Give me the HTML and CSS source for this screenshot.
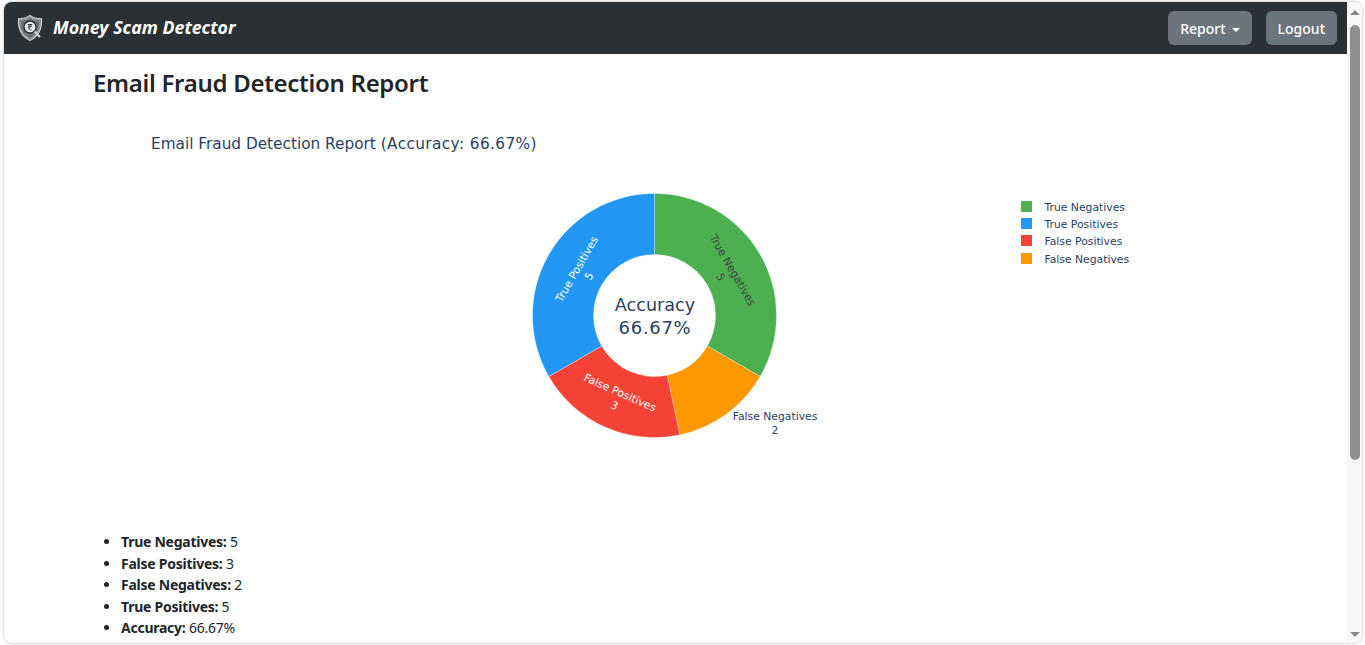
FILE: index.html
```html
<!DOCTYPE html>
<html lang="en">
<head>
<meta charset="UTF-8">
<meta name="viewport" content="width=device-width, initial-scale=1.0">
<title>Email Fraud Detection Report</title>
<link rel="stylesheet" href="styles.css">
</head>
<body>
<div class="window">
  <div class="page">
    <nav class="navbar">
      <a class="brand" href="#">
        <svg class="brand-logo" width="28" height="28" viewBox="0 0 28 28">
          <path d="M14 1.5 C17.5 4 21.5 4.8 25.5 4.8 C26 13 24.5 21.5 14 26.5 C3.5 21.5 2 13 2.5 4.8 C6.5 4.8 10.5 4 14 1.5 Z" fill="#8a8d8f" stroke="#c9cbcc" stroke-width="1.2"/>
          <path d="M14 4.500 C16.800 6.300 19.500 6.900 23 7 C23.200 14 21 20.500 14 24 C7 20.500 4.800 14 5 7 C8.500 6.900 11.200 6.300 14 4.500 Z" fill="#6b6e70"/>
          <circle cx="14" cy="13" r="6" fill="#e6e7e8" stroke="#2b3035" stroke-width="1.300"/>
          <path d="M11.800 10.500 H16.200 M11.800 12.200 H16.200 M12.200 10.500 C15.300 10.500 15.300 14 12.200 14 L15.300 16.300" fill="none" stroke="#33383c" stroke-width="1"/>
          <path d="M18.500 17.500 L24 23" stroke="#d5d6d7" stroke-width="2.200"/>
        </svg>
        <span class="brand-name">Money Scam Detector</span>
      </a>
      <div class="nav-actions">
        <button class="btn">Report<span class="caret"></span></button>
        <button class="btn">Logout</button>
      </div>
    </nav>
    <main class="content">
      <h1>Email Fraud Detection Report</h1>
      <svg class="chart" width="1200" height="408" viewBox="0 0 1200 408">
        <g transform="translate(-93,-112)">
          <text class="chart-title" x="151" y="149">Email Fraud Detection Report <tspan class="chart-title-acc">(Accuracy: 66.67%)</tspan></text>

          <path fill="#4caf50" stroke="#fff" stroke-width="0.300" d="M654.5 193.500 A122 122 0 0 1 760.15 376.500 L707.33 346 A61 61 0 0 0 654.5 254.500 Z"/>
          <path fill="#ff9800" stroke="#fff" stroke-width="0.300" d="M760.15 376.500 A122 122 0 0 1 679.87 434.83 L667.18 375.17 A61 61 0 0 0 707.33 346 Z"/>
          <path fill="#f44336" stroke="#fff" stroke-width="0.300" d="M679.87 434.83 A122 122 0 0 1 548.85 376.500 L601.67 346 A61 61 0 0 0 667.18 375.17 Z"/>
          <path fill="#2196f3" stroke="#fff" stroke-width="0.300" d="M548.85 376.500 A122 122 0 0 1 654.5 193.500 L654.5 254.500 A61 61 0 0 0 601.67 346 Z"/>

          <g class="slice-label dark" transform="translate(729.5,272) rotate(60)">
            <text y="0">True Negatives</text>
            <text y="14">5</text>
          </g>
          <g class="slice-label" transform="translate(580,271) rotate(-60)">
            <text y="0">True Positives</text>
            <text y="14">5</text>
          </g>
          <g class="slice-label" transform="translate(618.5,396) rotate(24)">
            <text y="0">False Positives</text>
            <text y="14">3</text>
          </g>
          <g class="slice-label outside">
            <text x="775" y="420">False Negatives</text>
            <text x="775" y="434">2</text>
          </g>

          <text class="center-label" x="655" y="311">Accuracy</text>
          <text class="center-label center-value" x="655" y="334">66.67%</text>

          <g class="legend">
            <rect x="1021" y="201" width="11" height="11" fill="#4caf50"/>
            <text x="1044.500" y="211">True Negatives</text>
            <rect x="1021" y="218" width="11" height="11" fill="#2196f3"/>
            <text x="1044.500" y="228">True Positives</text>
            <rect x="1021" y="235" width="11" height="11" fill="#f44336"/>
            <text x="1044.500" y="245">False Positives</text>
            <rect x="1021" y="253" width="11" height="11" fill="#ff9800"/>
            <text x="1044.500" y="263">False Negatives</text>
          </g>
        </g>
      </svg>
      <ul class="stats">
        <li><strong>True Negatives:</strong> 5</li>
        <li><strong>False Positives:</strong> 3</li>
        <li><strong>False Negatives:</strong> 2</li>
        <li><strong>True Positives:</strong> 5</li>
        <li><strong>Accuracy:</strong> 66.67%</li>
      </ul>
    </main>
  </div>
  <div class="scrollbar">
    <span class="arrow-up"></span>
    <div class="thumb"></div>
    <span class="arrow-down"></span>
  </div>
</div>
</body>
</html>
```
FILE: styles.css
```css
html, body {
    height: 100%;
}

body {
    margin: 0;
    padding: 2px 3px 1px 4px;
    box-sizing: border-box;
    background-color: #fff;
    font-family: "Noto Sans", "Liberation Sans", sans-serif;
    color: #212529;
    overflow: hidden;
}

.window {
    display: flex;
    height: 641px;
    overflow: hidden;
    background-color: #fff;
    border-radius: 8px;
    box-shadow: 0 0 3px rgba(0, 0, 0, 0.3);
}

.page {
    flex: 1;
    min-width: 0;
    overflow: hidden;
}

.navbar {
    display: flex;
    align-items: center;
    justify-content: space-between;
    height: 52px;
    padding: 0 10px 0 12px;
    background-color: #2b3035;
}

.brand {
    display: flex;
    align-items: center;
    gap: 9px;
    color: #fff;
    font-size: 17.8px;
    font-weight: 700;
    font-style: italic;
    text-decoration: none;
}

.brand-name {
    margin-top: -2px;
}

.brand-logo {
    display: block;
}

.nav-actions {
    display: flex;
    gap: 14px;
}

.btn {
    height: 34px;
    padding: 0 12px;
    border: 0;
    border-radius: 6px;
    background-color: #6c757d;
    color: #fff;
    font-family: inherit;
    font-size: 14px;
    font-weight: 500;
}

.caret {
    display: inline-block;
    margin-left: 6px;
    vertical-align: 2px;
    border-top: 4px solid #fff;
    border-left: 4px solid transparent;
    border-right: 4px solid transparent;
}

.content {
    padding: 0 0 0 89px;
}

h1 {
    margin: 0;
    padding-top: 13px;
    height: 45px;
    font-size: 24px;
    line-height: 32px;
    font-weight: 600;
    letter-spacing: -0.3px;
}

.chart {
    display: block;
}

.chart-title {
    font-family: "DejaVu Sans", sans-serif;
    font-size: 15.3px;
    fill: #2a3f5f;
}

.chart-title-acc {
    letter-spacing: 0.4px;
}

.slice-label text {
    font-family: "DejaVu Sans", sans-serif;
    font-size: 10.8px;
    text-anchor: middle;
    fill: #fff;
}

.slice-label.dark text {
    fill: #444;
}

.slice-label.outside text {
    fill: #2a3f5f;
}

.center-label {
    font-family: "DejaVu Sans", sans-serif;
    font-size: 17.6px;
    text-anchor: middle;
    fill: #2a3f5f;
}

.center-value {
    font-size: 18px;
    letter-spacing: 0.7px;
}

.legend text {
    font-family: "DejaVu Sans", sans-serif;
    font-size: 10.8px;
    fill: #2a3f5f;
}

.stats {
    margin: 11px 0 0;
    padding-left: 28px;
    font-size: 14px;
    line-height: 21.6px;
    letter-spacing: -0.25px;
}

.stats strong {
    font-weight: 700;
}

.scrollbar {
    display: flex;
    flex-direction: column;
    align-items: center;
    flex: 0 0 15px;
    background-color: #f8f8f8;
}

.arrow-up, .arrow-down {
    display: block;
    border-left: 5px solid transparent;
    border-right: 5px solid transparent;
}

.arrow-up {
    margin-top: 8px;
    border-bottom: 5px solid #8a8a8a;
}

.thumb {
    width: 10px;
    height: 435px;
    margin-top: 10px;
    background-color: #8f8f8f;
    border-radius: 5px;
}

.arrow-down {
    margin-top: auto;
    margin-bottom: 6px;
    border-top: 5px solid #8a8a8a;
}
```
